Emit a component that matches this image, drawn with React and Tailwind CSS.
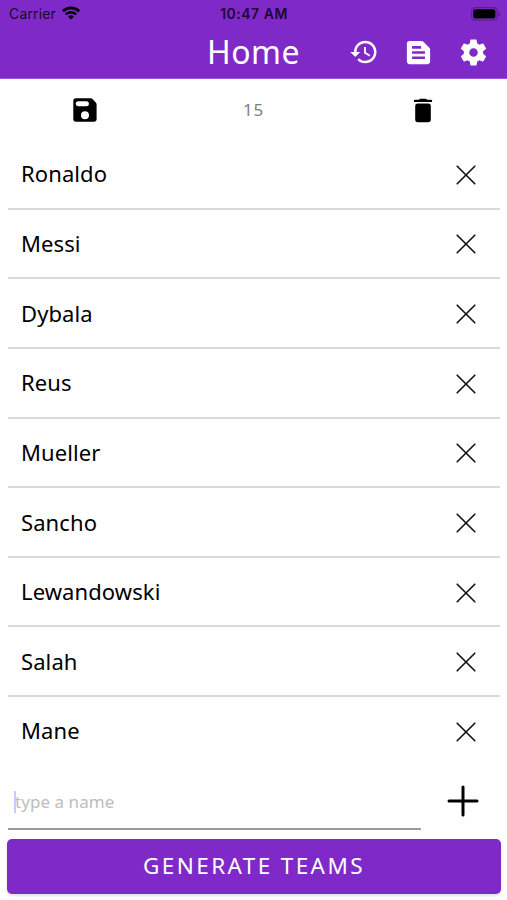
import { useState } from 'react'
import { MdHistory, MdTextSnippet } from 'react-icons/md'

const PLAYERS = ['Ronaldo', 'Messi', 'Dybala', 'Reus', 'Mueller', 'Sancho', 'Lewandowski', 'Salah', 'Mane']

function WifiIcon() {
  return (
    <svg width="18" height="14" viewBox="0 0 18 14" fill="none" stroke="currentColor" strokeWidth="2.7">
      <path d="M0.9 5.3a11.5 11.5 0 0 1 16.2 0" />
      <path d="M3.8 8.4a7.4 7.4 0 0 1 10.4 0" />
      <path d="M9 13.6 6.1 10.7a4.1 4.1 0 0 1 5.8 0z" fill="currentColor" stroke="none" />
    </svg>
  )
}

function BatteryIcon() {
  return (
    <svg width="30" height="14" viewBox="0 0 30 14">
      <rect x="0.6" y="0.6" width="25.4" height="12.6" rx="3.6" fill="none" stroke="#5a1c92" strokeWidth="1.1" />
      <rect x="2.2" y="2.2" width="22.2" height="9.4" rx="2" fill="#000" />
      <path d="M27.4 4.9c1.2.4 1.7 1.1 1.7 2s-.5 1.6-1.7 2z" fill="#5a1c92" />
    </svg>
  )
}

function GearIcon() {
  return (
    <svg width="31" height="31" viewBox="0 0 24 24" fill="currentColor">
      <path d="M12,15.3A3.3,3.3 0 0,1 8.7,12A3.3,3.3 0 0,1 12,8.7A3.3,3.3 0 0,1 15.3,12A3.3,3.3 0 0,1 12,15.3M19.43,12.97C19.47,12.65 19.5,12.33 19.5,12C19.5,11.67 19.47,11.34 19.43,11L21.54,9.37C21.73,9.22 21.78,8.95 21.66,8.73L19.66,5.27C19.54,5.05 19.27,4.96 19.05,5.05L16.56,6.05C16.04,5.66 15.5,5.32 14.87,5.07L14.5,2.42C14.46,2.18 14.25,2 14,2H10C9.75,2 9.54,2.18 9.5,2.42L9.13,5.07C8.5,5.32 7.96,5.66 7.44,6.05L4.95,5.05C4.73,4.96 4.46,5.05 4.34,5.27L2.34,8.73C2.21,8.95 2.27,9.22 2.46,9.37L4.57,11C4.53,11.34 4.5,11.67 4.5,12C4.5,12.33 4.53,12.65 4.57,12.97L2.46,14.63C2.27,14.78 2.21,15.05 2.34,15.27L4.34,18.73C4.46,18.95 4.73,19.03 4.95,18.95L7.44,17.94C7.96,18.34 8.5,18.68 9.13,18.93L9.5,21.58C9.54,21.82 9.75,22 10,22H14C14.25,22 14.46,21.82 14.5,21.58L14.87,18.93C15.5,18.67 16.04,18.34 16.56,17.94L19.05,18.95C19.27,19.03 19.54,18.95 19.66,18.73L21.66,15.27C21.78,15.05 21.73,14.78 21.54,14.63L19.43,12.97Z" />
    </svg>
  )
}

function SaveIcon() {
  return (
    <svg width="24" height="24" viewBox="0 0 24 24">
      <path
        fillRule="evenodd"
        fill="#000"
        d="M3 .3h14.6q1.1 0 1.9.8l3.3 3.3q.8.8.8 1.9V21a2.7 2.7 0 0 1-2.7 2.7H3A2.7 2.7 0 0 1 .3 21V3A2.7 2.7 0 0 1 3 .3zM5.2 3.2a2.5 2.5 0 0 0 0 5h8.2a2.5 2.5 0 0 0 0-5zM12 13.3a4 4 0 1 0 0 8 4 4 0 0 0 0-8z"
      />
    </svg>
  )
}

function TrashIcon() {
  return (
    <svg width="20" height="25" viewBox="0 0 20 25" fill="#000">
      <path d="M2.2 8a2.4 2.4 0 0 1 2.4-2.4h10.8A2.4 2.4 0 0 1 17.8 8v13.6a2.7 2.7 0 0 1-2.7 2.7H4.9a2.7 2.7 0 0 1-2.7-2.7z" />
      <path d="M2 1.7h3.8L7 .7h6l1.2 1H18a1.2 1.2 0 0 1 0 2.4H2a1.2 1.2 0 0 1 0-2.4z" />
    </svg>
  )
}

function CrossIcon() {
  return (
    <svg width="20" height="20" viewBox="0 0 20 20" stroke="#111" strokeWidth="1.6" strokeLinecap="round">
      <path d="M1.2 1.2l17.6 17.6M18.8 1.2L1.2 18.8" />
    </svg>
  )
}

function PlusIcon() {
  return (
    <svg width="32" height="32" viewBox="0 0 32 32" stroke="#000" strokeWidth="3" strokeLinecap="round">
      <path d="M16 2v28M2 16h28" />
    </svg>
  )
}

export default function App() {
  const [players, setPlayers] = useState(PLAYERS)
  const [name, setName] = useState('')

  const remove = (i) => setPlayers(players.filter((_, n) => n !== i))
  const add = () => {
    if (!name.trim()) return
    setPlayers([...players, name])
    setName('')
  }

  return (
    <div className="flex h-[900px] w-[507px] flex-col overflow-hidden bg-white font-['Noto_Sans',sans-serif] text-black">
      <header className="h-[79px] shrink-0 border-b border-[#9b4fdb] bg-[#7f2ac8]">
        {/* Status bar */}
        <div className="grid h-[27px] grid-cols-3 items-center pl-[9px] pr-[6px] font-['Inter',sans-serif] text-[14px] text-[#1c0730]">
          <div className="flex items-center gap-[6px]">
            <span className="tracking-[0.15px]">Carrier</span>
            <span className="-mt-px text-black"><WifiIcon /></span>
          </div>
          <span className="pr-[2px] text-center text-[14px] font-semibold tracking-[0.5px] whitespace-nowrap">10:47 AM</span>
          <div className="flex justify-end"><BatteryIcon /></div>
        </div>
        <div className="grid h-[50px] grid-cols-[1fr_auto_1fr] items-center">
          <span />
          <h1 className="text-[32px] leading-none tracking-[0.5px] text-white">Home</h1>
          <div className="flex items-center justify-end gap-6 pr-[18px] text-white">
            <MdHistory className="size-[30px]" />
            <MdTextSnippet className="size-[31px]" />
            <GearIcon />
          </div>
        </div>
      </header>

      <div className="grid h-[61px] shrink-0 grid-cols-3 place-items-center">
        <button aria-label="Save" className="pt-px"><SaveIcon /></button>
        <span className="text-[17px] tracking-[0.9px] text-[#808080]">15</span>
        <button aria-label="Delete all" className="pt-px"><TrashIcon /></button>
      </div>

      <ul className="shrink-0 pl-2 pr-[7px]">
        {players.map((p, i) => (
          <li
            key={p}
            className="flex h-[69.65px] items-center justify-between border-b-2 border-[#dadada] pl-[13px] pr-6 last:border-transparent"
          >
            <span className="pb-px text-[22px] leading-none tracking-[0.1px]">{p}</span>
            <button aria-label="Remove" className="pt-[2px]" onClick={() => remove(i)}><CrossIcon /></button>
          </li>
        ))}
      </ul>

      <div className="flex h-[63px] shrink-0 items-center pl-2">
        <div className="flex h-full w-[413px] items-center border-b-2 border-[#9a9a9a] pt-[9px] pl-[6px]">
          <span className="h-[22px] w-[2px] bg-[#c5cdfa]" />
          <input
            value={name}
            onChange={(e) => setName(e.target.value)}
            placeholder="type a name"
            className="-ml-px w-full text-[17px] tracking-[0.05px] outline-none placeholder:text-[#bdbdbd]"
          />
        </div>
        <button className="ml-[26px] pt-[5px]" aria-label="Add" onClick={add}><PlusIcon /></button>
      </div>

      <button className="mt-[9px] mr-[6px] ml-[7px] h-[55px] shrink-0 rounded-[5px] bg-[#7f2ac8] pb-px text-[22.5px] tracking-[2.4px] text-white shadow-[0_2px_3px_rgba(0,0,0,0.12)]">
        GENERATE TEAMS
      </button>
    </div>
  )
}
